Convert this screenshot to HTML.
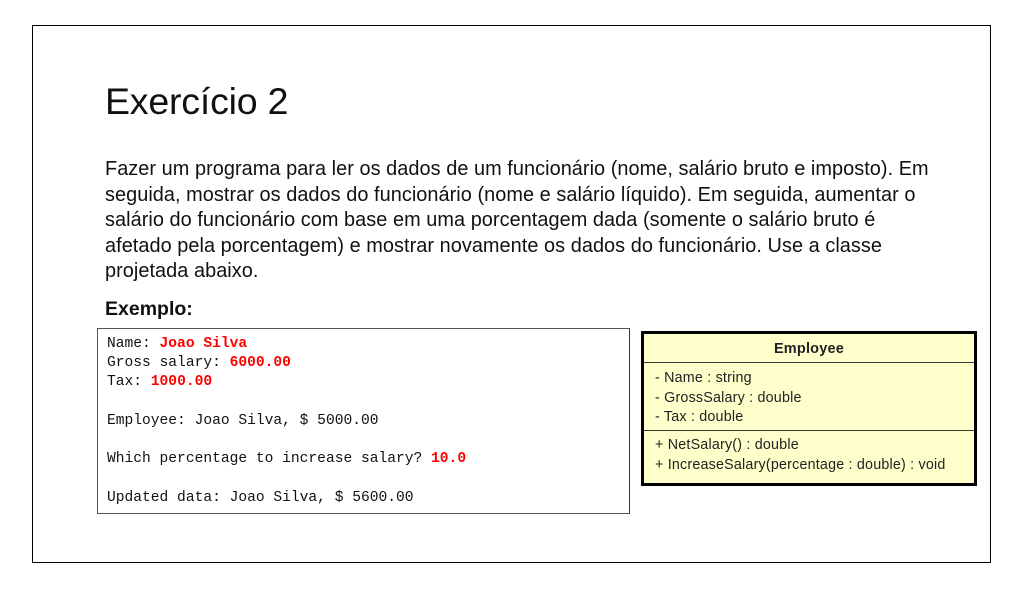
<!DOCTYPE html>
<html><head><meta charset="utf-8"><style>
body{margin:0;width:1033px;height:604px;background:#fff;position:relative;overflow:hidden;font-family:"Liberation Sans",sans-serif;}
.frame{position:absolute;left:32px;top:25px;width:957px;height:536px;border:1.5px solid #000;}
.t{position:absolute;left:105px;top:80px;font-size:37.5px;color:#111;letter-spacing:-0.2px;}
.p{position:absolute;left:105px;top:157px;font-size:19.9px;line-height:25.6px;color:#111;white-space:nowrap;letter-spacing:0.05px;}
.ex{position:absolute;left:105px;top:298px;font-size:19.5px;font-weight:bold;color:#111;}
.code{position:absolute;left:97px;top:328px;width:531px;height:184px;border:1px solid #555;border-right-color:#333;}
.code pre{margin:0;position:absolute;left:9px;top:6px;font-family:"Liberation Mono",monospace;font-size:14.6px;line-height:19.2px;color:#111;}
.r{color:#f00;font-weight:bold;}
.uml{position:absolute;left:641px;top:331px;width:330px;height:149px;border:3px solid #000;background:#ffffcc;font-size:14.3px;letter-spacing:0.2px;color:#222;}
.h{height:28px;border-bottom:1.5px solid #333;text-align:center;font-weight:bold;line-height:30px;font-size:14.5px;}
.a{border-bottom:1.5px solid #333;padding-left:11px;line-height:19.5px;padding-top:6px;box-sizing:border-box;height:68px;}
.m{padding-left:11px;line-height:19.5px;padding-top:5px;}
</style></head><body>
<div class="frame"></div>
<div class="t">Exercício 2</div>
<div class="p">Fazer um programa para ler os dados de um funcionário (nome, salário bruto e imposto). Em<br>seguida, mostrar os dados do funcionário (nome e salário líquido). Em seguida, aumentar o<br>salário do funcionário com base em uma porcentagem dada (somente o salário bruto é<br>afetado pela porcentagem) e mostrar novamente os dados do funcionário. Use a classe<br>projetada abaixo.</div>
<div class="ex">Exemplo:</div>
<div class="code"><pre>Name: <span class="r">Joao Silva</span>
Gross salary: <span class="r">6000.00</span>
Tax: <span class="r">1000.00</span>

Employee: Joao Silva, $ 5000.00

Which percentage to increase salary? <span class="r">10.0</span>

Updated data: Joao Silva, $ 5600.00</pre></div>
<div class="uml">
<div class="h">Employee</div>
<div class="a">- Name : string<br>- GrossSalary : double<br>- Tax : double</div>
<div class="m">+ NetSalary() : double<br>+ IncreaseSalary(percentage : double) : void</div>
</div>
</body></html>
